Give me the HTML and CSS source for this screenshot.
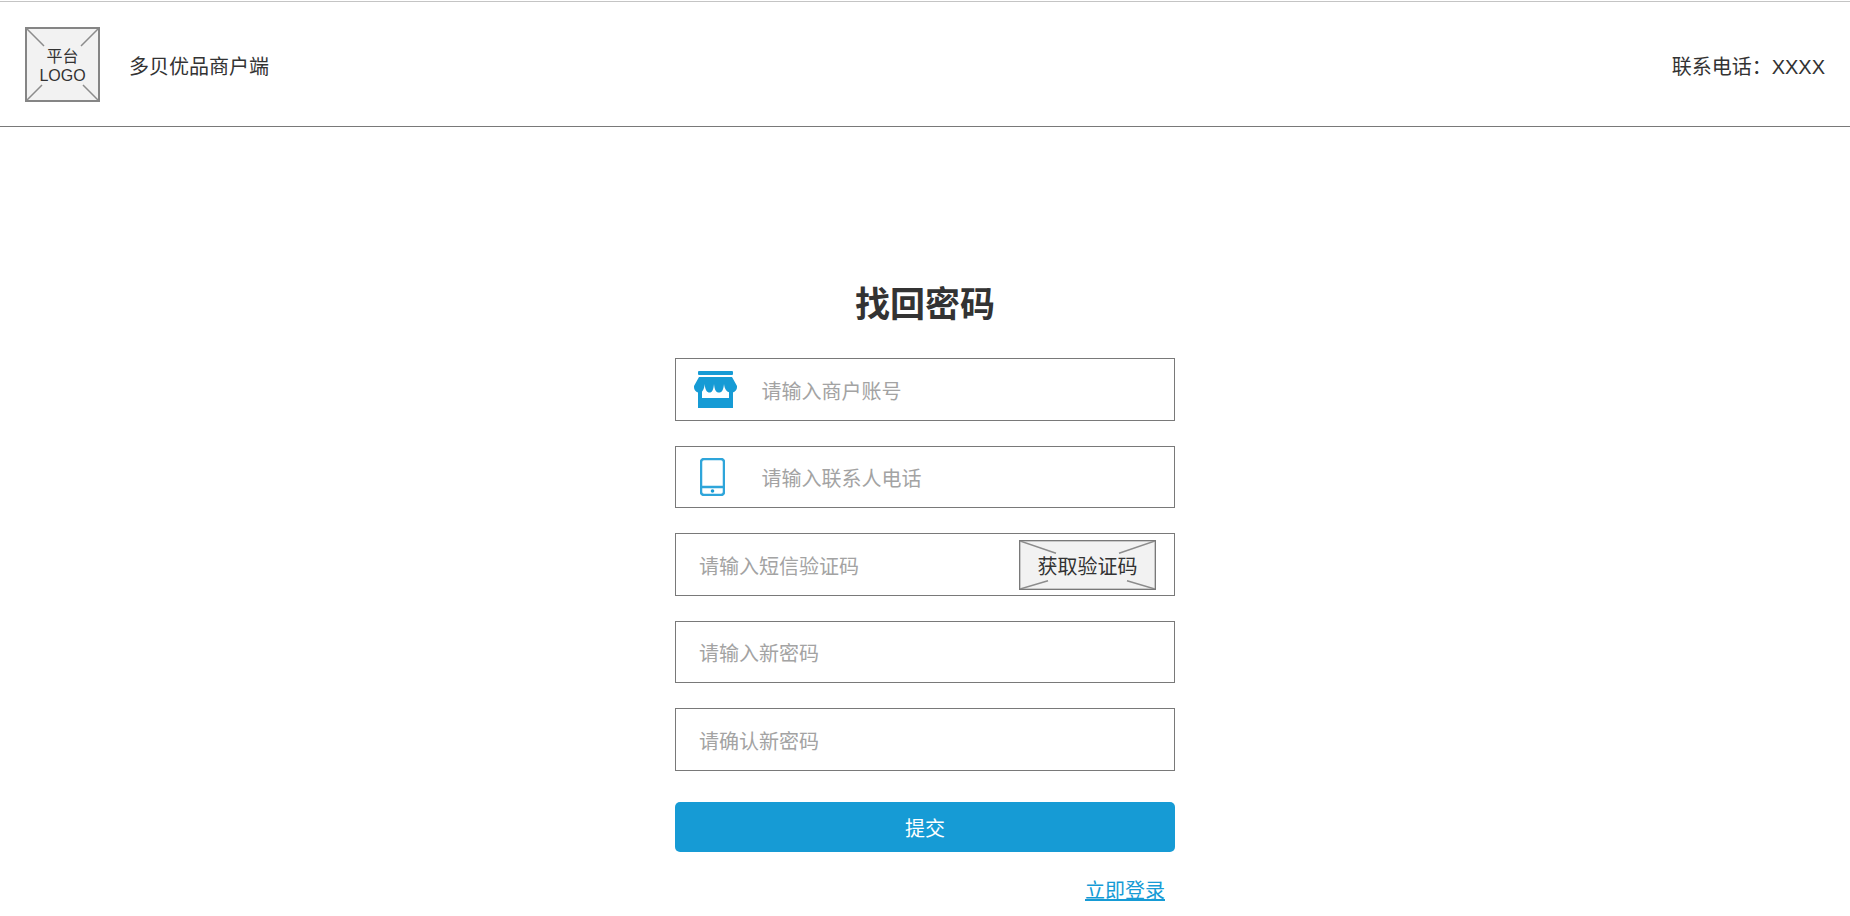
FILE: index.html
```html
<!DOCTYPE html>
<html lang="zh-CN">

<head>
    <meta charset="UTF-8">
    <title>找回密码</title>
    <link rel="stylesheet" href="styles.css">
</head>

<body>
    <header class="top-bar">
        <div class="brand">
            <div class="logo">
                <svg class="placeholder-lines" viewBox="0 0 71 71" preserveAspectRatio="none">
                    <path d="M0 0L17 17M71 0L54 17M0 71L15 56M71 71L56 56"></path>
                </svg>
                <span class="logo-text">平台<br>LOGO</span>
            </div>
            <span class="brand-name">多贝优品商户端</span>
        </div>
        <span class="contact">联系电话：XXXX</span>
    </header>

    <main class="form-wrap">
        <h1>找回密码</h1>
        <form class="reset-form">
            <div class="field">
                <svg class="field-icon icon-store" viewBox="0 0 43 37">
                    <rect x="4" y="0" width="35" height="4" rx="1"></rect>
                    <path d="M4 18H39V37H4ZM8 18V27H35V18Z" fill-rule="evenodd"></path>
                    <path d="M5 6H38L43 15V16C43 19.500 40.500 21.500 37 21.500C33.500 21.500 30.500 19 30 13C29.500 19 28 21.500 25 21.500C22 21.500 20.500 19 20 13C19.500 19 18 21.500 15.500 21.500C13 21.500 11 19 10.700 13C10.300 19 8 21.500 5.500 21.500C2.500 21.500 0 19.500 0 16V15Z"></path>
                </svg>
                <span class="placeholder with-icon">请输入商户账号</span>
            </div>
            <div class="field">
                <svg class="field-icon icon-phone" viewBox="0 0 25 38">
                    <rect x="1" y="1" width="23" height="36" rx="3"></rect>
                    <path d="M1 29H24"></path>
                    <circle cx="12.500" cy="33" r="1.800"></circle>
                </svg>
                <span class="placeholder with-icon">请输入联系人电话</span>
            </div>
            <div class="field">
                <span class="placeholder plain">请输入短信验证码</span>
                <button type="button" class="code-button">
                    <svg class="placeholder-lines" viewBox="0 0 135 47" preserveAspectRatio="none">
                        <path d="M0 0L36 12M135 0L99 12M0 47L28 39M135 47L107 39"></path>
                    </svg>
                    <span class="code-text">获取验证码</span>
                </button>
            </div>
            <div class="field">
                <span class="placeholder plain">请输入新密码</span>
            </div>
            <div class="field">
                <span class="placeholder plain">请确认新密码</span>
            </div>
            <button type="button" class="submit">提交</button>
        </form>
        <div class="login-row">
            <a href="#" class="login-link">立即登录</a>
        </div>
    </main>
</body>

</html>
```

FILE: styles.css
```css
html,
body {
    height: 100%;
}

body {
    margin: 0;
    padding-top: 1px;
    box-sizing: border-box;
    overflow: hidden;
    background-color: #fff;
    color: #333;
    font-family: "Liberation Sans", "Noto Sans CJK SC", sans-serif;
    font-size: 20px;
}

.top-bar {
    display: flex;
    justify-content: space-between;
    align-items: center;
    height: 126px;
    box-sizing: border-box;
    padding: 1px 25px 0 25px;
    border-top: 1px solid #c4c4c4;
    border-bottom: 1px solid #797979;
}

.brand {
    display: flex;
    align-items: center;
    gap: 29px;
}

.brand-name,
.contact {
    padding-top: 1px;
}

.logo {
    position: relative;
    display: flex;
    align-items: center;
    justify-content: center;
    width: 75px;
    height: 75px;
    box-sizing: border-box;
    border: 2px solid #858585;
    background-color: #f2f2f2;
}

.logo-text {
    position: relative;
    padding-top: 3px;
    font-size: 16px;
    line-height: 19px;
    text-align: center;
}

.placeholder-lines {
    position: absolute;
    top: 0;
    left: 0;
    width: 100%;
    height: 100%;
}

.placeholder-lines path {
    fill: none;
    stroke: #8c8c8c;
    stroke-width: 1.500;
}

.form-wrap {
    width: 500px;
    margin: 0 auto;
}

h1 {
    margin: 0;
    padding-top: 152px;
    height: 79px;
    line-height: 52px;
    font-size: 35px;
    font-weight: 700;
    text-align: center;
    color: #333;
}

.reset-form {
    display: flex;
    flex-direction: column;
    gap: 25px;
}

.field {
    position: relative;
    display: flex;
    align-items: center;
    height: 62.5px;
    box-sizing: border-box;
    padding-left: 22px;
    border: 1px solid #797979;
    background-color: #fff;
}

.field-icon {
    flex: none;
}

.icon-store {
    width: 43px;
    height: 37px;
    margin-left: -4px;
    fill: #169bd5;
}

.icon-phone {
    width: 25px;
    height: 38px;
    margin-left: 2px;
    fill: none;
    stroke: #2ea5da;
    stroke-width: 2.500;
}

.icon-phone circle {
    fill: #169bd5;
    stroke: none;
}

.placeholder {
    padding-top: 2px;
    color: #a3a3a3;
}

.plain {
    margin-left: 1px;
}

.with-icon {
    margin-left: 24.500px;
}

.icon-phone + .with-icon {
    margin-left: 36.500px;
}

.code-button {
    position: absolute;
    top: 6px;
    right: 18px;
    width: 137px;
    height: 50px;
    padding: 0;
    border: 1px solid #797979;
    box-shadow: inset 0 0 0 1px #c8c8c8;
    background-color: #f2f2f2;
    color: #333;
    font: inherit;
}

.code-text {
    position: relative;
}

.submit {
    height: 50px;
    margin-top: 6.500px;
    border: none;
    border-radius: 5px;
    background-color: #169bd5;
    color: #fff;
    font: inherit;
}

.login-row {
    display: flex;
    justify-content: flex-end;
    padding: 25px 10px 0 0;
}

.login-link {
    color: #169bd5;
    line-height: 28px;
}
```
